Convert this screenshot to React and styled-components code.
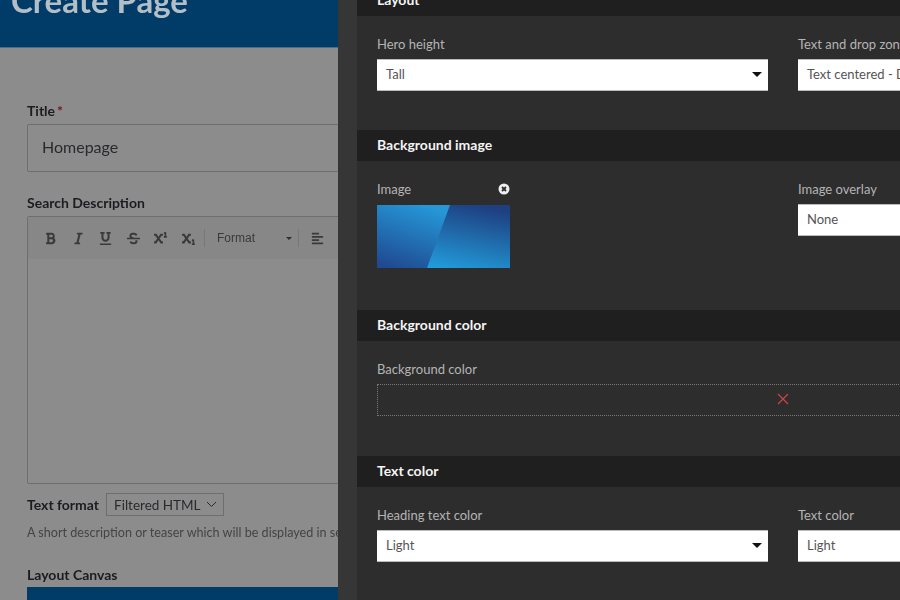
import React from 'react';
import styled, { createGlobalStyle } from 'styled-components';
import { FaBold, FaItalic, FaUnderline, FaStrikethrough, FaSuperscript, FaSubscript, FaAlignLeft } from 'react-icons/fa';

const GlobalStyle = createGlobalStyle`
  html, body {
    margin: 0;
    height: 600px;
    overflow: hidden;
    background: #2d2d2d;
  }
  * { box-sizing: border-box; }
`;

const Screen = styled.div`
  display: flex;
  font-family: Lato, 'Open Sans', sans-serif;
  height: 600px;
  overflow: hidden;
  width: 900px;
`;

const Page = styled.div`
  background: #8c8c8c;
  flex: 0 0 338px;
  overflow: hidden;
`;

const Hero = styled.div`
  align-items: flex-end;
  background: #013c68;
  border-bottom: 1px solid #4a6f8c;
  display: flex;
  height: 48px;
  overflow: hidden;
  padding: 0 0 29px 11px;
`;

const HeroTitle = styled.h1`
  color: #b4bec6;
  filter: blur(0.4px);
  flex: none;
  font-size: 33px;
  font-weight: 700;
  line-height: 36px;
  margin: 0;
  white-space: nowrap;
`;

const PageBody = styled.div`
  filter: blur(0.4px);
  padding: 54px 0 0 27px;
  width: 420px;
`;

const FieldLabel = styled.div`
  color: #1c1c20;
  font-size: 14px;
  font-weight: 700;
  line-height: 17px;
`;

const Required = styled.span`
  color: #7a1020;
  margin-left: 2px;
`;

const TitleInput = styled.div`
  align-items: center;
  border: 1px solid #6e6e6e;
  border-radius: 2px;
  color: #2a2a2e;
  display: flex;
  font-size: 16px;
  height: 48px;
  margin: 5px 0 22px;
  padding: 0 0 4px 14px;
`;

const Editor = styled.div`
  border: 1px solid #6e6e6e;
  border-radius: 2px;
  height: 268px;
  margin-top: 5px;
`;

const EditorBar = styled.div`
  align-items: center;
  background: #878787;
  color: #3a3a3c;
  display: flex;
  height: 42px;
`;

const ToolButton = styled.span`
  align-items: center;
  display: flex;
  justify-content: center;
  width: 27.5px;
  &:first-child { margin-left: 9px; }
`;

const BarDivider = styled.span`
  background: #787878;
  height: 18px;
  margin: 0 12px 0 2px;
  width: 1px;
`;

const FormatSelect = styled.span`
  align-items: center;
  color: #3a3a3c;
  display: flex;
  font-family: 'Liberation Sans', sans-serif;
  font-size: 12px;
  justify-content: space-between;
  margin-right: 4px;
  width: 75px;
`;

const TinyCaret = styled.span`
  border-left: 3px solid transparent;
  border-right: 3px solid transparent;
  border-top: 3px solid #2e2e30;
`;

const FormatRow = styled.div`
  align-items: center;
  display: flex;
  gap: 7px;
  margin-top: 9px;
`;

const FormatDropdown = styled.div`
  align-items: center;
  border: 1px solid #6e6e6e;
  color: #2a2a2e;
  display: flex;
  font-size: 13.5px;
  gap: 5px;
  height: 23px;
  padding: 0 6px 0 7px;
`;

const HelpText = styled.div`
  color: #444446;
  font-size: 12.6px;
  line-height: 16px;
  margin-top: 9px;
  white-space: nowrap;
`;

const CanvasLabel = styled(FieldLabel)`
  margin-top: 25px;
`;

const CanvasBar = styled.div`
  background: #013c68;
  height: 20px;
  margin-top: 4px;
`;

const Panel = styled.div`
  background: #2d2d2d;
  border-left: 19px solid #363636;
  flex: 1;
  min-width: 0;
  overflow: hidden;
`;

const SectionHeader = styled.div`
  align-items: flex-end;
  background: #1f1f1f;
  color: #f4f4f4;
  display: flex;
  font-size: 14px;
  font-weight: 700;
  height: ${props => props.$height || 31}px;
  overflow: hidden;
  padding: 0 0 ${props => props.$bottom || 8}px 20px;
`;

const Fields = styled.div`
  display: grid;
  gap: 30px;
  grid-template-columns: 391px 391px;
  height: ${props => props.$height}px;
  padding: 20px 0 0 20px;
`;

const Field = styled.div`
  display: flex;
  flex-direction: column;
`;

const Label = styled.div`
  color: #b4b4b4;
  font-size: 13px;
  line-height: 16px;
  margin-bottom: 7px;
  white-space: nowrap;
`;

const Select = styled.div`
  align-items: center;
  background: #fff;
  border: 1px solid #bbb;
  border-width: 1px 0 1px 0;
  color: #555;
  display: flex;
  font-size: 13px;
  height: 32px;
  justify-content: space-between;
  overflow: hidden;
  padding: 0 6px 2px 9px;
  white-space: nowrap;
`;

const Caret = styled.span`
  border-left: 5px solid transparent;
  border-right: 5px solid transparent;
  border-top: 5px solid #111;
`;

const ImageHead = styled.div`
  align-items: center;
  display: flex;
  justify-content: space-between;
  margin-bottom: 8px;
  width: 133px;
`;

const ImageLabel = styled(Label)`
  margin-bottom: 0;
`;

const Thumb = styled.svg`
  display: block;
`;

const ColorField = styled.div`
  align-items: center;
  border: 1px dotted #777;
  display: flex;
  height: 32px;
  padding: 0 0 3px 399px;
  width: 600px;
`;

const App = () => (
  <>
    <GlobalStyle />
    <Screen>
      <Page>
        <Hero>
          <HeroTitle>Create Page</HeroTitle>
        </Hero>
        <PageBody>
          <FieldLabel>
            Title<Required>*</Required>
          </FieldLabel>
          <TitleInput>Homepage</TitleInput>
          <FieldLabel>Search Description</FieldLabel>
          <Editor>
            <EditorBar>
              <ToolButton><FaBold size={13} /></ToolButton>
              <ToolButton><FaItalic size={13} /></ToolButton>
              <ToolButton><FaUnderline size={13} /></ToolButton>
              <ToolButton><FaStrikethrough size={13} /></ToolButton>
              <ToolButton><FaSuperscript size={13} /></ToolButton>
              <ToolButton><FaSubscript size={13} /></ToolButton>
              <BarDivider />
              <FormatSelect>
                Format
                <TinyCaret />
              </FormatSelect>
              <BarDivider />
              <FaAlignLeft size={13} />
            </EditorBar>
          </Editor>
          <FormatRow>
            <FieldLabel>Text format</FieldLabel>
            <FormatDropdown>
              Filtered HTML
              <svg width="11" height="7" viewBox="0 0 11 7" fill="none" stroke="#2a2a2e" strokeWidth="1">
                <path d="M1 1l4.5 4.5L10 1" />
              </svg>
            </FormatDropdown>
          </FormatRow>
          <HelpText>A short description or teaser which will be displayed in search</HelpText>
          <CanvasLabel>Layout Canvas</CanvasLabel>
          <CanvasBar />
        </PageBody>
      </Page>
      <Panel>
        <SectionHeader $height={16} $bottom={8}>Layout</SectionHeader>
        <Fields $height={114}>
          <Field>
            <Label>Hero height</Label>
            <Select>Tall<Caret /></Select>
          </Field>
          <Field>
            <Label>Text and drop zone position</Label>
            <Select>Text centered - Drop zone below</Select>
          </Field>
        </Fields>
        <SectionHeader>Background image</SectionHeader>
        <Fields $height={149}>
          <Field>
            <ImageHead>
              <ImageLabel>Image</ImageLabel>
              <svg width="12" height="12" viewBox="0 0 12 12">
                <circle cx="6" cy="6" r="5.5" fill="#eee" />
                <path d="M4 4l4 4M8 4l-4 4" stroke="#2e2e2e" strokeWidth="1.8" />
              </svg>
            </ImageHead>
            <Thumb width="133" height="63" viewBox="0 0 133 63">
              <defs>
                <linearGradient id="thumbLeft" x1="0.6" y1="0" x2="0.2" y2="1">
                  <stop offset="0" stopColor="#2596d6" />
                  <stop offset="1" stopColor="#1f4a92" />
                </linearGradient>
                <linearGradient id="thumbRight" x1="0.75" y1="0" x2="0.3" y2="1">
                  <stop offset="0" stopColor="#1e3f80" />
                  <stop offset="1" stopColor="#22a2e0" />
                </linearGradient>
              </defs>
              <rect width="133" height="63" fill="url(#thumbRight)" />
              <path d="M0 0H73L50 63H0Z" fill="url(#thumbLeft)" />
            </Thumb>
          </Field>
          <Field>
            <Label>Image overlay</Label>
            <Select>None</Select>
          </Field>
        </Fields>
        <SectionHeader>Background color</SectionHeader>
        <Fields $height={115}>
          <Field>
            <Label>Background color</Label>
            <ColorField>
              <svg width="12" height="12" viewBox="0 0 12 12" stroke="#c8464a" strokeWidth="1.2">
                <path d="M1 1l10 10M11 1L1 11" />
              </svg>
            </ColorField>
          </Field>
        </Fields>
        <SectionHeader>Text color</SectionHeader>
        <Fields $height={113}>
          <Field>
            <Label>Heading text color</Label>
            <Select>Light<Caret /></Select>
          </Field>
          <Field>
            <Label>Text color</Label>
            <Select>Light</Select>
          </Field>
        </Fields>
      </Panel>
    </Screen>
  </>
);

export default App;
